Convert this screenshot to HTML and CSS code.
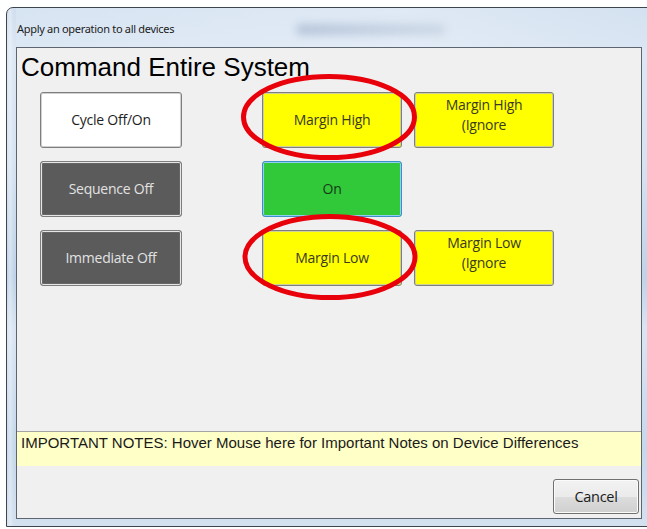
FILE: index.html
```html
<!DOCTYPE html>
<html lang="en">
<head>
<meta charset="utf-8">
<title>Apply an operation to all devices</title>
<link rel="stylesheet" href="styles.css">
</head>
<body>
<div class="window">
  <div class="titlebar">
    <span class="caption">Apply an operation to all devices</span>
    <span class="glass-blur"></span>
  </div>
  <div class="client">
    <h1 class="heading">Command Entire System</h1>
    <div class="commands">
      <button class="cmd cmd-light">Cycle Off/On</button>
      <button class="cmd cmd-yellow">Margin High</button>
      <button class="cmd cmd-yellow cmd-two">Margin High<br>(Ignore</button>
      <button class="cmd cmd-dark">Sequence Off</button>
      <button class="cmd cmd-green">On</button>
      <span class="empty"></span>
      <button class="cmd cmd-dark">Immediate Off</button>
      <button class="cmd cmd-yellow">Margin Low</button>
      <button class="cmd cmd-yellow cmd-two">Margin Low<br>(Ignore</button>
    </div>
    <div class="spacer"></div>
    <div class="notes">IMPORTANT NOTES: Hover Mouse here for Important Notes on Device Differences</div>
    <div class="footer">
      <button class="cancel">Cancel</button>
    </div>
  </div>
  <svg class="marks" width="647" height="529" viewBox="0 0 647 529" aria-hidden="true">
    <ellipse cx="329" cy="117" rx="85.5" ry="40.5" fill="none" stroke="#e8000b" stroke-width="5"/>
    <ellipse cx="330" cy="257" rx="85" ry="40.5" fill="none" stroke="#e8000b" stroke-width="5"/>
  </svg>
</div>
</body>
</html>
```

FILE: styles.css
```css
html, body {
  margin: 0;
  padding: 0;
}

body {
  width: 647px;
  height: 529px;
  overflow: hidden;
  background: #ffffff;
  position: relative;
}

/* Aero-style window frame */
.window {
  margin: 7px 0 0 6px;
  width: 650px;
  height: 520px;
  box-sizing: border-box;
  border: 1px solid #3d4650;
  border-radius: 7px 7px 0 0;
  padding: 0 0 0 9px;
  display: flex;
  flex-direction: column;
  background:
    linear-gradient(to right, rgba(255,255,255,0.0) 0, rgba(255,255,255,0.35) 3px, rgba(255,255,255,0) 7px),
    linear-gradient(to bottom, #cfdded 0%, #dce7f3 8%, #d6e3f1 30%, #c0d3e8 52%, #d9e5f2 62%, #c7d8ec 85%, #d4e1ef 100%);
}

.titlebar {
  height: 39px;
  flex: none;
  display: flex;
  align-items: center;
  position: relative;
  background: linear-gradient(to right, rgba(220,232,245,0.6), rgba(230,238,248,0.7) 60%, rgba(215,228,242,0.5));
}

.caption {
  font-family: "Noto Sans", "Open Sans", sans-serif;
  font-size: 11px;
  color: #1b1b1b;
  margin-left: 1px;
  margin-top: 2px;
  letter-spacing: -0.3px;
}

.glass-blur {
  position: absolute;
  left: 280px;
  top: 16px;
  width: 150px;
  height: 11px;
  border-radius: 6px;
  background: linear-gradient(to right, rgba(140,160,190,0.5), rgba(170,185,205,0.35));
  filter: blur(4px);
}

.client {
  width: 626px;
  height: 472px;
  box-sizing: border-box;
  border: 1px solid #5d6670;
  background: #f0f0f0;
  display: flex;
  flex-direction: column;
}

.heading {
  margin: 4px 0 0 4px;
  font-family: "Liberation Sans", Arial, sans-serif;
  font-weight: normal;
  font-size: 26px;
  line-height: 30px;
  color: #000000;
}

.commands {
  margin: 10px 0 0 23px;
  display: grid;
  grid-template-columns: 222px 152px 140px;
  grid-template-rows: 56px 56px 56px;
  row-gap: 13px;
}

.cmd {
  width: 140px;
  height: 56px;
  box-sizing: border-box;
  border: 1px solid #7e7e7e;
  border-radius: 3px;
  padding: 0;
  font-family: "Open Sans", "Noto Sans", sans-serif;
  font-size: 14px;
  letter-spacing: -0.25px;
  line-height: 20px;
  cursor: default;
}

.cmd-light {
  width: 142px;
  background: #ffffff;
  color: #1e1e1e;
  box-shadow: inset 0 0 0 1px #d0d0d0;
}

.cmd-dark {
  width: 142px;
  background: #5b5b5b;
  color: #e2e2e2;
  box-shadow: inset 0 0 0 1px #e6e6e6, inset 0 0 0 2px #666666;
}

.cmd-yellow {
  background: #ffff00;
  color: #3a3a22;
  box-shadow: inset 0 0 0 1px #cfcf9a;
}

.cmd-two {
  padding-bottom: 10px;
}

.cmd-green {
  background: #31c83a;
  color: #183a18;
  border-color: #3c8fc6;
  box-shadow: inset 0 0 0 1px #8fd0f2;
}

.spacer {
  flex: 1;
}

.notes {
  height: 35px;
  box-sizing: border-box;
  border-top: 1px solid #a4a4a4;
  background: #ffffc8;
  padding: 2px 0 0 4px;
  font-family: "Liberation Sans", Arial, sans-serif;
  font-size: 15px;
  color: #1a1a1a;
}

.footer {
  display: flex;
  justify-content: flex-end;
  padding: 13px 2px 4px 0;
}

.cancel {
  width: 86px;
  height: 35px;
  box-sizing: border-box;
  border: 1px solid #707070;
  border-radius: 3px;
  background: linear-gradient(to bottom, #f2f2f2 0%, #ebebeb 50%, #dddddd 51%, #cfcfcf 100%);
  box-shadow: inset 0 0 0 1px #fbfbfb;
  font-family: "Open Sans", "Noto Sans", sans-serif;
  font-size: 14.5px;
  letter-spacing: -0.3px;
  color: #1a1a1a;
  padding: 0;
}

/* red annotation rings drawn over the dialog */
.marks {
  position: absolute;
  left: 0;
  top: 0;
  pointer-events: none;
}
```
